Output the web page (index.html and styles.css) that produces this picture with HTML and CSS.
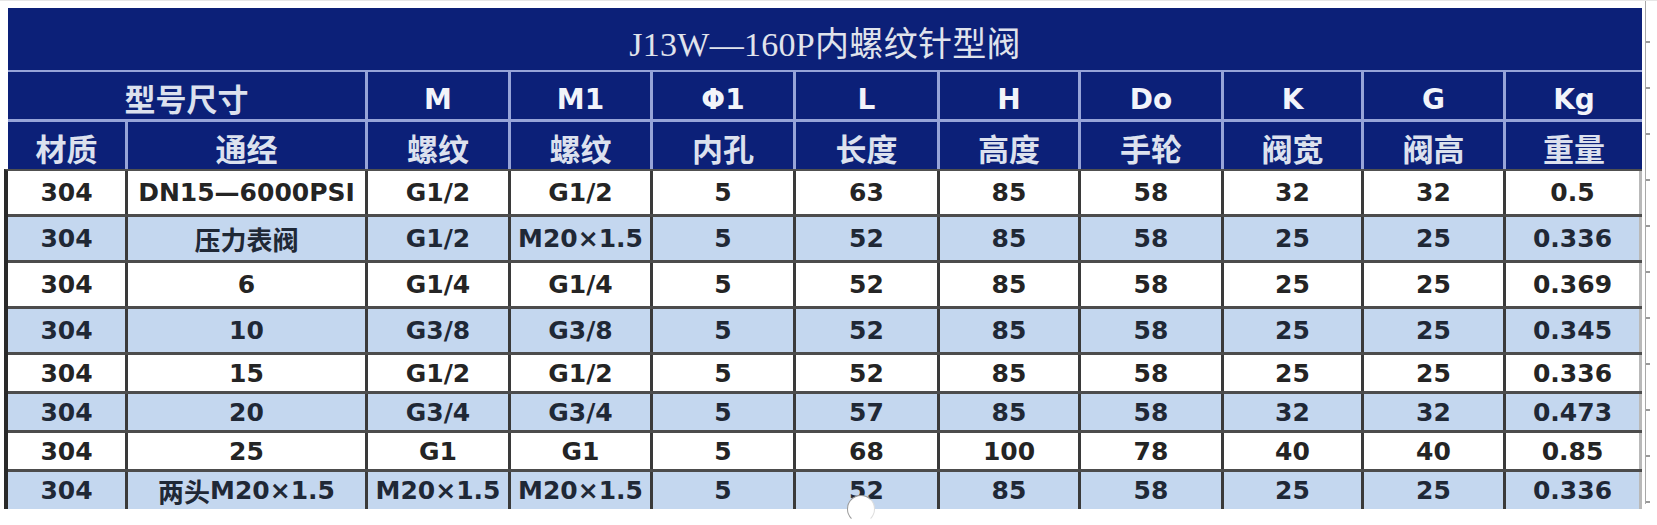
FILE: index.html
```html
<!DOCTYPE html>
<html lang="zh">
<head>
<meta charset="utf-8">
<title>J13W—160P内螺纹针型阀</title>
<link rel="stylesheet" href="styles.css">
</head>
<body>
<div class="page">
  <div class="sheet">
    <div class="head">
      <div class="title">J13W—160P内螺纹针型阀</div>
      <div class="hrow">
        <div class="hc cjk span2">型号尺寸</div>
        <div class="hc lat">M</div>
        <div class="hc lat">M1</div>
        <div class="hc lat">Φ1</div>
        <div class="hc lat">L</div>
        <div class="hc lat">H</div>
        <div class="hc lat">Do</div>
        <div class="hc lat">K</div>
        <div class="hc lat">G</div>
        <div class="hc lat">Kg</div>
      </div>
      <div class="hrow last">
        <div class="hc cjk">材质</div>
        <div class="hc cjk">通经</div>
        <div class="hc cjk">螺纹</div>
        <div class="hc cjk">螺纹</div>
        <div class="hc cjk">内孔</div>
        <div class="hc cjk">长度</div>
        <div class="hc cjk">高度</div>
        <div class="hc cjk">手轮</div>
        <div class="hc cjk">阀宽</div>
        <div class="hc cjk">阀高</div>
        <div class="hc cjk">重量</div>
      </div>
    </div>
    <div class="body">
      <div class="row tall white"><div class="c">304</div><div class="c">DN15—6000PSI</div><div class="c">G1/2</div><div class="c">G1/2</div><div class="c">5</div><div class="c">63</div><div class="c">85</div><div class="c">58</div><div class="c">32</div><div class="c">32</div><div class="c">0.5</div></div>
      <div class="row tall blue"><div class="c">304</div><div class="c cn">压力表阀</div><div class="c">G1/2</div><div class="c">M20×1.5</div><div class="c">5</div><div class="c">52</div><div class="c">85</div><div class="c">58</div><div class="c">25</div><div class="c">25</div><div class="c">0.336</div></div>
      <div class="row tall white"><div class="c">304</div><div class="c">6</div><div class="c">G1/4</div><div class="c">G1/4</div><div class="c">5</div><div class="c">52</div><div class="c">85</div><div class="c">58</div><div class="c">25</div><div class="c">25</div><div class="c">0.369</div></div>
      <div class="row tall blue"><div class="c">304</div><div class="c">10</div><div class="c">G3/8</div><div class="c">G3/8</div><div class="c">5</div><div class="c">52</div><div class="c">85</div><div class="c">58</div><div class="c">25</div><div class="c">25</div><div class="c">0.345</div></div>
      <div class="row short white"><div class="c">304</div><div class="c">15</div><div class="c">G1/2</div><div class="c">G1/2</div><div class="c">5</div><div class="c">52</div><div class="c">85</div><div class="c">58</div><div class="c">25</div><div class="c">25</div><div class="c">0.336</div></div>
      <div class="row short blue"><div class="c">304</div><div class="c">20</div><div class="c">G3/4</div><div class="c">G3/4</div><div class="c">5</div><div class="c">57</div><div class="c">85</div><div class="c">58</div><div class="c">32</div><div class="c">32</div><div class="c">0.473</div></div>
      <div class="row short white"><div class="c">304</div><div class="c">25</div><div class="c">G1</div><div class="c">G1</div><div class="c">5</div><div class="c">68</div><div class="c">100</div><div class="c">78</div><div class="c">40</div><div class="c">40</div><div class="c">0.85</div></div>
      <div class="row short blue end"><div class="c">304</div><div class="c"><span class="cn">两头</span>M20×1.5</div><div class="c">M20×1.5</div><div class="c">M20×1.5</div><div class="c">5</div><div class="c">52</div><div class="c">85</div><div class="c">58</div><div class="c">25</div><div class="c">25</div><div class="c">0.336</div></div>
      <div class="blob"></div>
    </div>
  </div>
  <div class="edge"></div>
</div>
</body>
</html>
```

FILE: styles.css
```css
* { box-sizing: border-box; }

html, body {
  margin: 0;
  padding: 0;
  background: #ffffff;
}

.page {
  --cols: 117px 240px 143px 142px 143px 144px 141px 143px 140px 142px 139px;
  display: flex;
  align-items: flex-start;
  padding: 7px 0 0 8px;
  height: 525px;
  overflow: hidden;
  border-top: 1px solid #e6e6e6;
}

.sheet {
  width: 1634px;
  display: flex;
  flex-direction: column;
}

.head {
  background: #0c2078;
  color: #e9ebf3;
}

.title {
  height: 64px;
  border-bottom: 2px solid #97a4d8;
  display: flex;
  align-items: center;
  justify-content: center;
  padding-top: 4px;
  font-family: "Liberation Serif", "Noto Sans CJK SC", serif;
  font-size: 34px;
  color: #e0e3ec;
  letter-spacing: 0.3px;
}

.hrow {
  display: grid;
  grid-template-columns: var(--cols);
  height: 50px;
  border-bottom: 3px solid #97a4d8;
}

.hrow.last {
  height: 47px;
  border-bottom: none;
}

.hc {
  display: flex;
  align-items: center;
  justify-content: center;
  border-left: 3px solid #97a4d8;
}

.hc:first-child { border-left: none; }

.span2 { grid-column: span 2; }

.hc.lat {
  font-family: "DejaVu Sans", "Liberation Sans", sans-serif;
  font-weight: bold;
  font-size: 28px;
  color: #f2f4fa;
  padding-top: 6px;
}

.hc.cjk {
  font-family: "Noto Sans CJK SC", sans-serif;
  font-weight: 700;
  font-size: 31px;
  color: #dce1ee;
  padding-top: 3px;
}

.body {
  position: relative;
  margin-left: -4px;
  border-left: 4px solid #2a2a2a;
  border-top: 2px solid #505050;
}

.row {
  display: grid;
  grid-template-columns: var(--cols);
  border-bottom: 3px solid #4c4c4c;
  font-family: "DejaVu Sans", "Liberation Sans", sans-serif;
  font-weight: bold;
  font-size: 25px;
  color: #242424;
}

.row.tall { height: 46px; }
.row.short { height: 39px; }
.row.end { border-bottom: none; height: 37px; }

.row.white { background: #ffffff; }
.row.blue { background: #c4d7ef; color: #1f2836; }

.c {
  display: flex;
  align-items: center;
  justify-content: center;
  white-space: nowrap;
  border-left: 3px solid #3a3a3a;
}

.c:first-child { border-left: none; }
.c:last-child { border-right: 3px solid #b9b9b9; }

.cn {
  font-family: "Noto Sans CJK SC", sans-serif;
  font-weight: 700;
  font-size: 26px;
}

.blob {
  position: absolute;
  left: 839px;
  bottom: -14px;
  width: 28px;
  height: 28px;
  border-radius: 50%;
  background: #ffffff;
  border: 1px solid #9a9a9a;
  border-right-color: #dddddd;
  border-bottom-color: #ffffff;
}

.edge {
  width: 6px;
  height: 503px;
  margin-left: 3px;
  margin-top: -7px;
  border-left: 1px solid #a8a8a8;
  background: repeating-linear-gradient(to bottom, transparent 0 40px, #9a9a9a 40px 42px, transparent 42px 46px);
  background-size: 4px 100%;
  background-repeat: no-repeat;
}
```
